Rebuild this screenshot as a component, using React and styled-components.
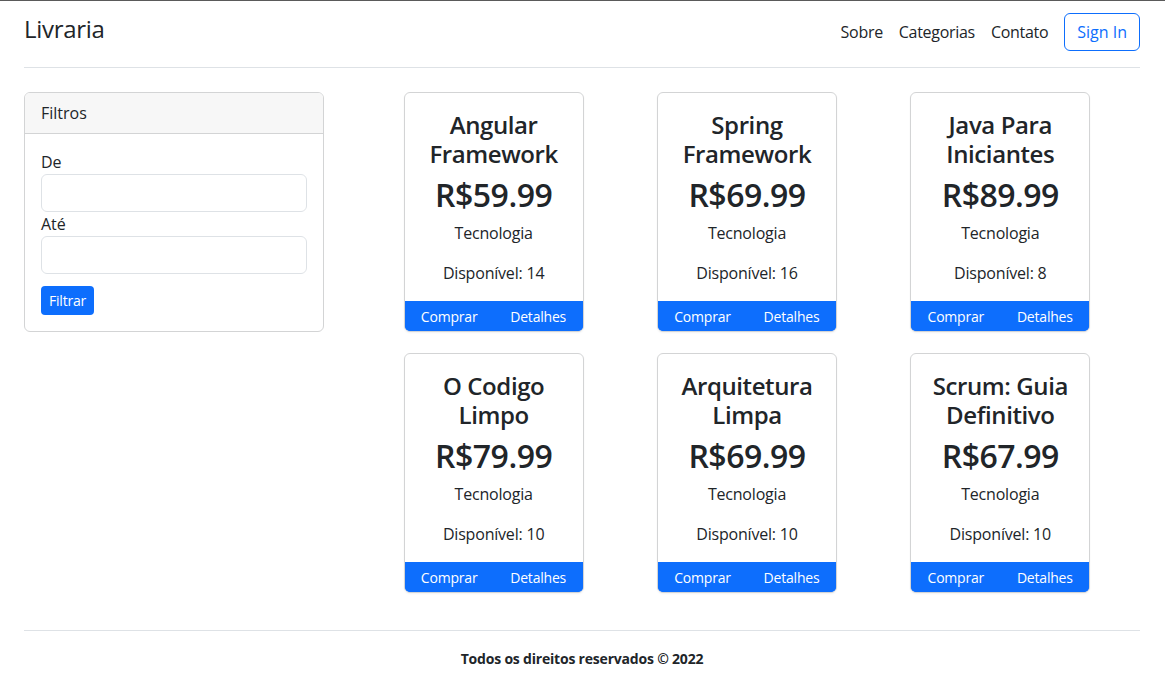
import styled, { createGlobalStyle } from "styled-components";

const GlobalStyle = createGlobalStyle`
    * {
        box-sizing: border-box;
    }
    body {
        margin: 0;
        background: #fff;
        color: #212529;
        font-family: "Open Sans", "Noto Sans", sans-serif;
        font-size: 16px;
        line-height: 1.5;
    }
`

const books = [
    {title: "Angular Framework", price: "59.99", category: "Tecnologia", stock: 14},
    {title: "Spring Framework", price: "69.99", category: "Tecnologia", stock: 16},
    {title: "Java Para Iniciantes", price: "89.99", category: "Tecnologia", stock: 8},
    {title: "O Codigo Limpo", price: "79.99", category: "Tecnologia", stock: 10},
    {title: "Arquitetura Limpa", price: "69.99", category: "Tecnologia", stock: 10},
    {title: "Scrum: Guia Definitivo", price: "67.99", category: "Tecnologia", stock: 10},
];

function BookCard({book}) {
    return (
        <Card>
            <CardBody>
                <Title>{book.title}</Title>
                <Price>R${book.price}</Price>
                <Info>{book.category}</Info>
                <Info $spaced>Disponível: {book.stock}</Info>
            </CardBody>
            <Actions>
                <ActionButton>Comprar</ActionButton>
                <ActionButton>Detalhes</ActionButton>
            </Actions>
        </Card>
    )
}

export default function App() {
    return (
        <Page>
            <GlobalStyle />
            <Header>
                <Brand>Livraria</Brand>
                <Nav>
                    <NavLink>Sobre</NavLink>
                    <NavLink>Categorias</NavLink>
                    <NavLink>Contato</NavLink>
                    <SignIn>Sign In</SignIn>
                </Nav>
            </Header>
            <Main>
                <FilterCard>
                    <FilterHeader>Filtros</FilterHeader>
                    <FilterBody>
                        <Label>De</Label>
                        <Input />
                        <Label>Até</Label>
                        <Input />
                        <FilterButton>Filtrar</FilterButton>
                    </FilterBody>
                </FilterCard>
                <Grid>
                    {books.map((book) => <BookCard key={book.title} book={book} />)}
                </Grid>
            </Main>
            <Footer>Todos os direitos reservados © 2022</Footer>
        </Page>
    )
}

const Page = styled.div`
    border-top: 1px solid #5a5a5a;
    padding: 0 25px 0 24px;
    min-height: 689px;
`

const Header = styled.header`
    display: flex;
    align-items: center;
    justify-content: space-between;
    padding: 11px 0 15px;
    border-bottom: 1px solid #dee2e6;
    margin-bottom: 24px;
`

const Brand = styled.div`
    font-size: 24px;
    line-height: 1.2;
    letter-spacing: -0.3px;
    margin-top: -6px;
`

const Nav = styled.nav`
    display: flex;
    align-items: center;
`

const NavLink = styled.a`
    padding: 8px;
    color: #212529;
    font-size: 16px;
    letter-spacing: -0.3px;
    cursor: pointer;
`

const SignIn = styled.button`
    margin-left: 8px;
    height: 38px;
    padding: 6px 12px;
    border: 1px solid #0d6efd;
    border-radius: 6px;
    background: #fff;
    color: #0d6efd;
    font-family: inherit;
    font-size: 16px;
    line-height: 1.5;
`

const Main = styled.main`
    display: grid;
    grid-template-columns: 300px 760px;
    column-gap: 43px;
    align-items: start;
`

const FilterCard = styled.div`
    border: 1px solid #d3d4d5;
    border-radius: 6px;
    overflow: hidden;
`

const FilterHeader = styled.div`
    background: #f7f7f7;
    border-bottom: 1px solid #d3d4d5;
    padding: 8px 16px;
    line-height: 24px;
`

const FilterBody = styled.div`
    padding: 16px;
    display: flex;
    flex-direction: column;
    align-items: flex-start;
`

const Label = styled.label`
    line-height: 24px;
`

const Input = styled.input`
    width: 100%;
    height: 38px;
    border: 1px solid #dee2e6;
    border-radius: 6px;
    padding: 6px 12px;
    font-family: inherit;
    font-size: 16px;
`

const FilterButton = styled.button`
    margin-top: 12px;
    padding: 4px 8px;
    border: none;
    border-radius: 4px;
    background: #0d6efd;
    color: #fff;
    font-family: inherit;
    font-size: 14px;
    line-height: 21px;
    letter-spacing: -0.2px;
`

const Grid = styled.div`
    display: grid;
    grid-template-columns: repeat(3, 1fr);
    row-gap: 21px;
    justify-items: center;
`

const Card = styled.div`
    width: 180px;
    border: 1px solid #d3d4d5;
    border-radius: 6px;
    overflow: hidden;
    text-align: center;
    box-shadow: 0 1px 2px rgba(0, 0, 0, 0.05);
`

const CardBody = styled.div`
    padding: 17px 8px 16px;
`

const Title = styled.h4`
    margin: 0 0 8px;
    font-size: 24px;
    line-height: 29px;
    font-weight: 600;
    letter-spacing: -0.4px;
`

const Price = styled.div`
    margin: 0 0 7px;
    font-size: 32px;
    line-height: 38px;
    font-weight: 600;
    letter-spacing: -0.5px;
`

const Info = styled.p`
    margin: ${({$spaced}) => $spaced ? "16px 0 0" : "0"};
    line-height: 24px;
    letter-spacing: -0.2px;
`

const Actions = styled.div`
    display: grid;
    grid-template-columns: 1fr 1fr;
    background: #0d6efd;
`

const ActionButton = styled.button`
    height: 30px;
    border: none;
    background: #0d6efd;
    color: #fff;
    font-family: inherit;
    font-size: 14px;
    letter-spacing: -0.2px;
`

const Footer = styled.footer`
    margin-top: 37px;
    border-top: 1px solid #dee2e6;
    padding-top: 17px;
    text-align: center;
    font-size: 14px;
    font-weight: 700;
    line-height: 21px;
    letter-spacing: -0.2px;
`
